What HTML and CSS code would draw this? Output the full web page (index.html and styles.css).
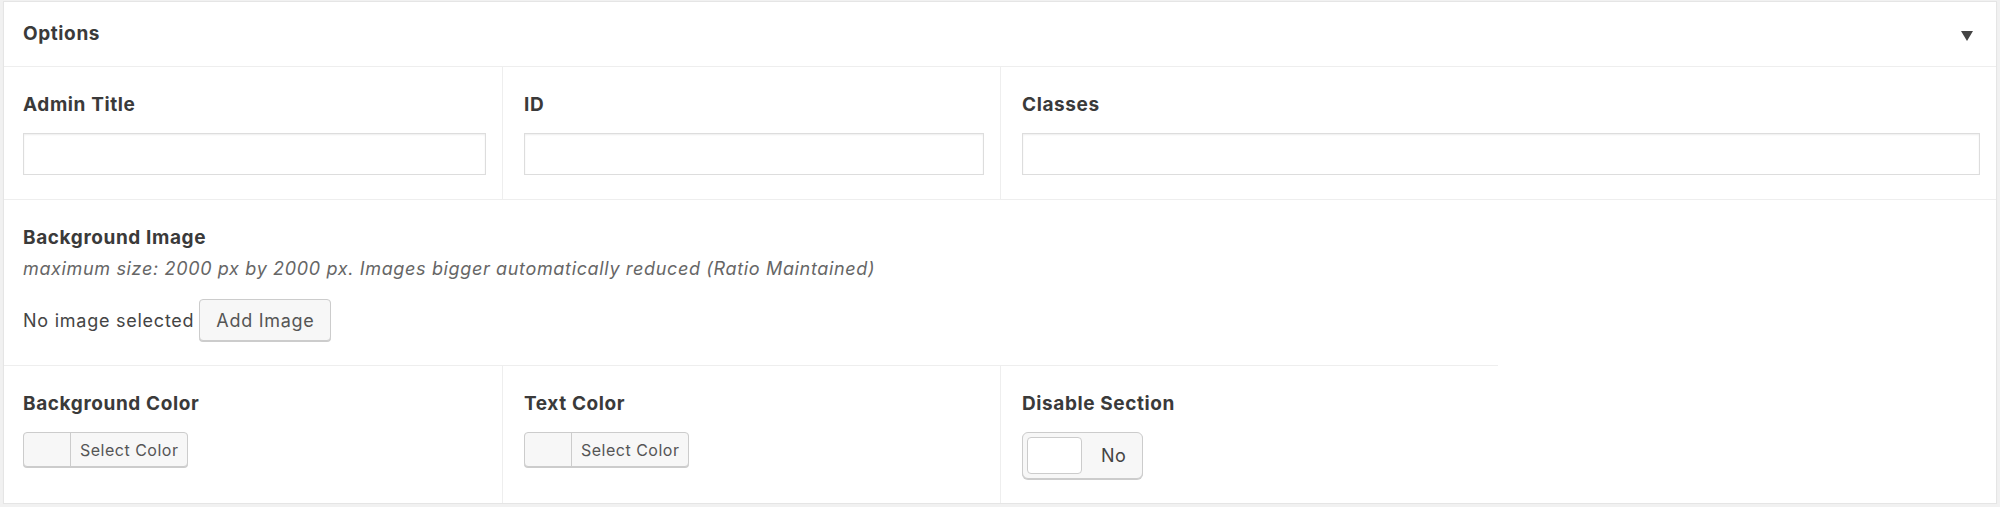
FILE: index.html
```html
<!DOCTYPE html>
<html lang="en">
<head>
<meta charset="utf-8">
<title>Options</title>
<link rel="stylesheet" href="styles.css">
</head>
<body>
<div class="postbox">
  <div class="postbox-header">
    <h2 class="hndle">Options</h2>
    <span class="toggle-indicator" aria-hidden="true"></span>
  </div>
  <div class="fields">
    <div class="field span-1 first">
      <label class="field-label">Admin Title</label>
      <input class="text-input" type="text">
    </div>
    <div class="field span-1">
      <label class="field-label">ID</label>
      <input class="text-input" type="text">
    </div>
    <div class="field span-2">
      <label class="field-label">Classes</label>
      <input class="text-input" type="text">
    </div>

    <div class="field span-4 first">
      <label class="field-label">Background Image</label>
      <p class="description">maximum size: 2000 px by 2000 px. Images bigger automatically reduced (Ratio Maintained)</p>
      <div class="image-uploader">
        <span class="no-image">No image selected</span>
        <button class="button" type="button">Add Image</button>
      </div>
    </div>

    <div class="field span-1 first">
      <label class="field-label">Background Color</label>
      <button class="color-result" type="button"><span class="swatch"></span><span class="color-text">Select Color</span></button>
    </div>
    <div class="field span-1">
      <label class="field-label">Text Color</label>
      <button class="color-result" type="button"><span class="swatch"></span><span class="color-text">Select Color</span></button>
    </div>
    <div class="field span-1">
      <label class="field-label">Disable Section</label>
      <div class="switch"><span class="switch-knob"></span><span class="switch-text">No</span></div>
    </div>
  </div>
</div>
</body>
</html>
```
FILE: styles.css
```css
html, body {
  margin: 0;
  padding: 0;
  background: #f1f1f1;
}

body {
  padding: 1px 3px 0 3px;
  font-family: Inter, "Liberation Sans", sans-serif;
  color: #444;
}

.postbox {
  background: #fff;
  border: 1px solid #e5e5e5;
  box-shadow: 0 1px 1px rgba(0, 0, 0, 0.04);
  height: 503px;
  box-sizing: border-box;
}

.postbox-header {
  display: flex;
  align-items: center;
  justify-content: space-between;
  padding: 18px 23px 18px 19px;
}

.hndle {
  margin: 0;
  font-size: 19px;
  line-height: 28px;
  font-weight: 700;
  letter-spacing: 0.6px;
  color: #3a3a3a;
}

.toggle-indicator {
  width: 0;
  height: 0;
  border-left: 6px solid transparent;
  border-right: 6px solid transparent;
  border-top: 10px solid #444;
  margin-top: 3px;
}

.fields {
  display: grid;
  grid-template-columns: repeat(4, 1fr);
}

.field {
  border-top: 1px solid #eeeeee;
  border-left: 1px solid #eeeeee;
  padding: 24px 16px 24px 21px;
  min-width: 0;
}

.field.first {
  border-left: 0;
  padding-left: 19px;
}

.span-1 { grid-column: span 1; }
.span-2 { grid-column: span 2; }
.span-4 { grid-column: span 4; }

.field-label {
  display: block;
  font-size: 19px;
  line-height: 28px;
  font-weight: 700;
  letter-spacing: 0.6px;
  color: #3a3a3a;
  margin-bottom: 14px;
}

.span-4 .field-label {
  margin-bottom: 3px;
}

.text-input {
  display: block;
  width: 100%;
  box-sizing: border-box;
  height: 42px;
  margin: 0;
  border: 1px solid #dddddd;
  box-shadow: inset 0 1px 2px rgba(0, 0, 0, 0.07);
  background: #fff;
  border-radius: 0;
}

.description {
  margin: 0 0 16px;
  font-size: 18px;
  line-height: 28px;
  font-style: italic;
  letter-spacing: 0.65px;
  color: #666;
}

.image-uploader {
  display: flex;
  align-items: center;
  gap: 5px;
}

.no-image {
  font-size: 18px;
  letter-spacing: 0.75px;
  color: #444;
}

.button {
  height: 42px;
  padding: 0 16px;
  font-family: inherit;
  font-size: 18px;
  letter-spacing: 0.7px;
  color: #555;
  background: #f7f7f7;
  border: 1px solid #cccccc;
  border-radius: 4px;
  box-shadow: 0 1px 0 #cccccc;
}

.color-result {
  display: flex;
  align-items: stretch;
  height: 35px;
  padding: 0;
  font-family: inherit;
  background: #f7f7f7;
  border: 1px solid #cccccc;
  border-radius: 4px;
  box-shadow: 0 1px 0 #cccccc;
  overflow: hidden;
}

.swatch {
  width: 46px;
  border-right: 1px solid #cccccc;
}

.color-text {
  display: flex;
  align-items: center;
  padding: 0 9px 0 9px;
  font-size: 16px;
  letter-spacing: 0.5px;
  color: #555;
}

.switch {
  display: inline-flex;
  align-items: center;
  box-sizing: border-box;
  width: 121px;
  height: 47px;
  padding: 4px;
  background: #f7f7f7;
  border: 1px solid #cccccc;
  border-radius: 6px;
  box-shadow: 0 1px 0 #cccccc;
}

.switch-knob {
  width: 55px;
  height: 37px;
  box-sizing: border-box;
  background: #fff;
  border: 1px solid #cccccc;
  border-radius: 4px;
}

.switch-text {
  margin-left: 19px;
  font-size: 18px;
  letter-spacing: 0.5px;
  color: #444;
}
```
